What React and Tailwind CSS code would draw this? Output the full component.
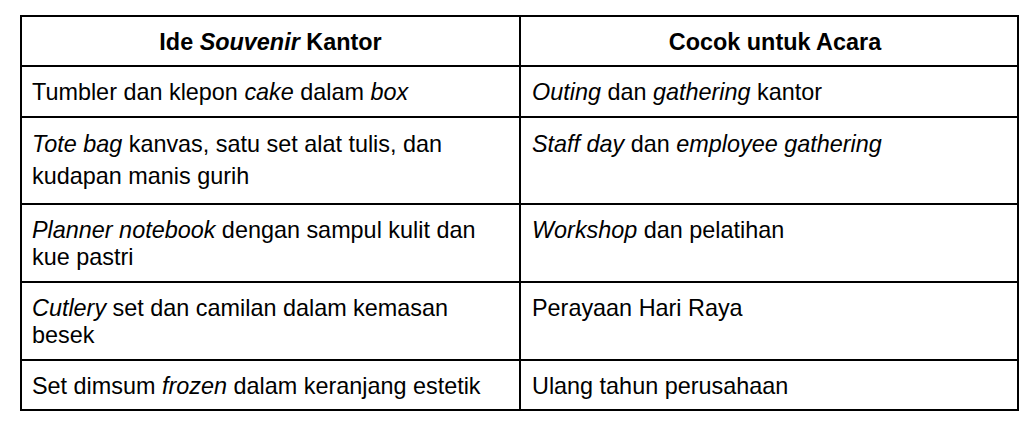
const ROWS = [
  {
    h: 'h-[51px] leading-[27px] pt-[12px]',
    left: <>Tumbler dan klepon <em>cake</em> dalam <em>box</em></>,
    right: <><em>Outing</em> dan <em>gathering</em> kantor</>,
  },
  {
    h: 'h-[87px] leading-[32px] pt-[10px]',
    left: <><em>Tote bag</em> kanvas, satu set alat tulis, dan kudapan manis gurih</>,
    right: <><em>Staff day</em> dan <em>employee gathering</em></>,
  },
  {
    h: 'h-[78px] leading-[27px] pt-[12px]',
    left: <><em>Planner notebook</em> dengan sampul kulit dan kue pastri</>,
    right: <><em>Workshop</em> dan pelatihan</>,
  },
  {
    h: 'h-[78px] leading-[27px] pt-[12px]',
    left: <><em>Cutlery</em> set dan camilan dalam kemasan besek</>,
    right: <>Perayaan Hari Raya</>,
  },
  {
    h: 'h-[50px] leading-[27px] pt-[12px]',
    left: <>Set dimsum <em>frozen</em> dalam keranjang estetik</>,
    right: <>Ulang tahun perusahaan</>,
  },
];

export default function App() {
  return (
    <div className="min-h-[432px] w-[1036px] bg-white pl-[20px] pt-[15px] font-['Liberation_Sans',Arial,sans-serif] text-[23.4px] text-black">
      <div className="grid w-[999px] grid-cols-[499px_498px] border-l-2 border-t-2 border-black">
        <div className="h-[50px] border-b-2 border-r-2 border-black px-[10px] pt-[12px] text-center font-bold leading-[27px]">
          Ide <em>Souvenir</em> Kantor
        </div>
        <div className="h-[50px] border-b-2 border-r-2 border-black pl-[16px] pr-[4px] pt-[12px] text-center font-bold leading-[27px]">
          Cocok untuk Acara
        </div>
        {ROWS.map((row, i) => (
          <div key={i} className="contents">
            <div className={`${row.h} border-b-2 border-r-2 border-black pl-[10px] pr-[12px]`}>{row.left}</div>
            <div className={`${row.h} border-b-2 border-r-2 border-black pl-[11px] pr-[12px]`}>{row.right}</div>
          </div>
        ))}
      </div>
    </div>
  );
}
